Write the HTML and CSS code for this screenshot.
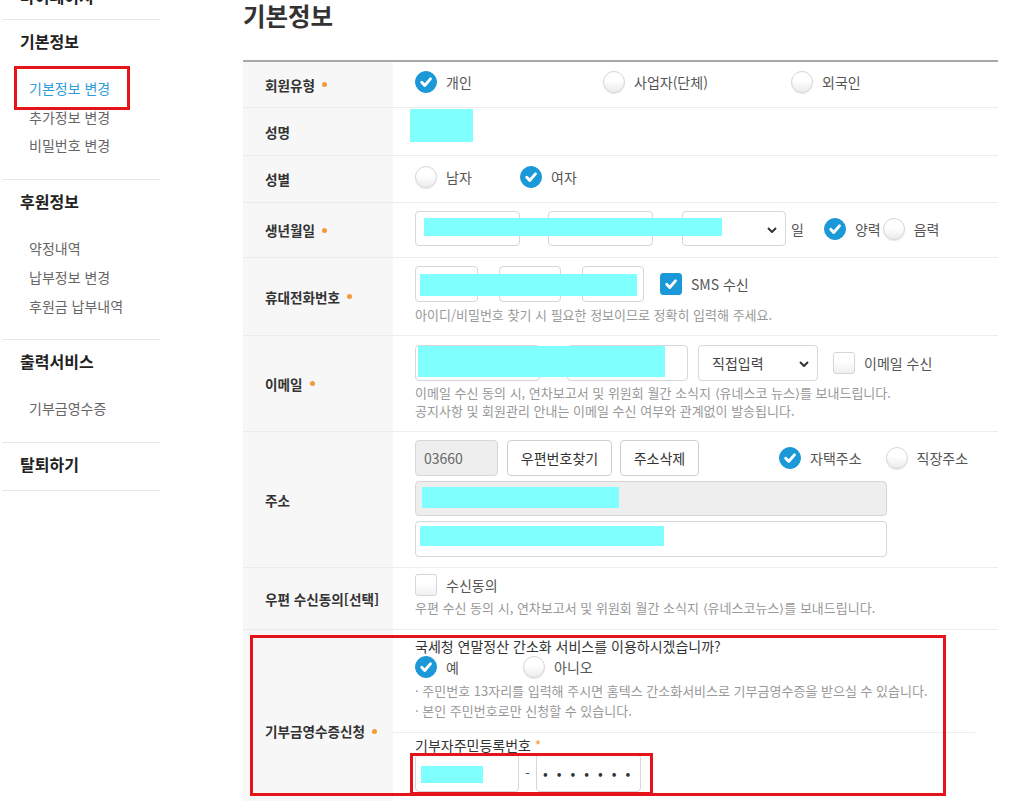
FILE: index.html
```html
<!DOCTYPE html>
<html lang="ko">
<head>
<meta charset="utf-8">
<title>기본정보</title>
<link rel="stylesheet" href="styles.css">
</head>
<body>
<div class="page">
  <aside class="side">
    <div class="side-top"><span class="side-top-txt">마이페이지</span></div>
    <section class="side-sec">
      <h2 class="side-h">기본정보</h2>
      <ul class="side-list">
        <li class="side-item active">기본정보 변경</li>
        <li class="side-item">추가정보 변경</li>
        <li class="side-item">비밀번호 변경</li>
      </ul>
    </section>
    <section class="side-sec">
      <h2 class="side-h">후원정보</h2>
      <ul class="side-list">
        <li class="side-item">약정내역</li>
        <li class="side-item">납부정보 변경</li>
        <li class="side-item">후원금 납부내역</li>
      </ul>
    </section>
    <section class="side-sec">
      <h2 class="side-h">출력서비스</h2>
      <ul class="side-list">
        <li class="side-item">기부금영수증</li>
      </ul>
    </section>
    <section class="side-sec last">
      <h2 class="side-h">탈퇴하기</h2>
    </section>
  </aside>

  <main class="main">
    <h1 class="title">기본정보</h1>
    <div class="form">

      <div class="row">
        <div class="lbl">회원유형<span class="req"></span></div>
        <div class="cell r1">
          <div class="opts wide">
            <span class="opt"><span class="rb on"><svg viewBox="0 0 22 22"><path d="M6.3 11.3l3.3 3.5L15.9 7.6"/></svg></span>개인</span>
            <span class="opt"><span class="rb"></span>사업자(단체)</span>
            <span class="opt"><span class="rb"></span>외국인</span>
          </div>
        </div>
      </div>

      <div class="row">
        <div class="lbl">성명</div>
        <div class="cell r2"><div class="name-mask"></div></div>
      </div>

      <div class="row">
        <div class="lbl">성별</div>
        <div class="cell r3">
          <div class="opts">
            <span class="opt w105"><span class="rb"></span>남자</span>
            <span class="opt"><span class="rb on"><svg viewBox="0 0 22 22"><path d="M6.3 11.3l3.3 3.5L15.9 7.6"/></svg></span>여자</span>
          </div>
        </div>
      </div>

      <div class="row">
        <div class="lbl">생년월일<span class="req"></span></div>
        <div class="cell r4">
          <div class="line">
            <span class="inp w105"></span>
            <span class="inp w105 ml28"></span>
            <span class="inp sel w104 ml29"><svg class="chev" viewBox="0 0 10 6"><path d="M1 1l4 4 4-4"/></svg></span>
            <span class="txt ml5">일</span>
            <span class="opt ml20"><span class="rb on"><svg viewBox="0 0 22 22"><path d="M6.3 11.3l3.3 3.5L15.9 7.6"/></svg></span>양력</span>
            <span class="opt tight"><span class="rb"></span>음력</span>
          </div>
          <span class="mask m-birth"></span>
        </div>
      </div>

      <div class="row">
        <div class="lbl">휴대전화번호<span class="req"></span></div>
        <div class="cell r5">
          <div class="line">
            <span class="inp h36 w63"></span>
            <span class="inp h36 w62 ml21"></span>
            <span class="inp h36 w62 ml21"></span>
            <span class="opt ml16"><span class="cb on"><svg viewBox="0 0 22 22"><path d="M6.3 11.3l3.3 3.5L15.9 7.6"/></svg></span>SMS 수신</span>
          </div>
          <p class="hint mt3">아이디/비밀번호 찾기 시 필요한 정보이므로 정확히 입력해 주세요.</p>
          <span class="mask m-phone"></span>
        </div>
      </div>

      <div class="row">
        <div class="lbl">이메일<span class="req"></span></div>
        <div class="cell r6">
          <div class="line">
            <span class="inp h36 w125"></span>
            <span class="inp h36 w121 ml27"></span>
            <span class="inp h36 sel w120 ml10"><span class="seltxt">직접입력</span><svg class="chev" viewBox="0 0 10 6"><path d="M1 1l4 4 4-4"/></svg></span>
            <span class="opt ml15"><span class="cb"></span>이메일 수신</span>
          </div>
          <p class="hint mt3 lh18">이메일 수신 동의 시, 연차보고서 및 위원회 월간 소식지 ⟨유네스코 뉴스⟩를 보내드립니다.<br>공지사항 및 회원관리 안내는 이메일 수신 여부와 관계없이 발송됩니다.</p>
          <span class="mask m-email"></span>
        </div>
      </div>

      <div class="row">
        <div class="lbl">주소</div>
        <div class="cell r7">
          <div class="line">
            <span class="inp h36 w83 gray zip">03660</span>
            <span class="btn w105 ml9">우편번호찾기</span>
            <span class="btn w79 ml8">주소삭제</span>
            <span class="opt ml80"><span class="rb on"><svg viewBox="0 0 22 22"><path d="M6.3 11.3l3.3 3.5L15.9 7.6"/></svg></span>자택주소</span>
            <span class="opt ml24"><span class="rb"></span>직장주소</span>
          </div>
          <span class="inp block gray mt5"></span>
          <span class="inp block h36 mt5"></span>
          <span class="mask m-addr1"></span>
          <span class="mask m-addr2"></span>
        </div>
      </div>

      <div class="row">
        <div class="lbl">우편 수신동의[선택]</div>
        <div class="cell r8">
          <div class="line">
            <span class="opt"><span class="cb"></span>수신동의</span>
          </div>
          <p class="hint mt2">우편 수신 동의 시, 연차보고서 및 위원회 월간 소식지 ⟨유네스코뉴스⟩를 보내드립니다.</p>
        </div>
      </div>

      <div class="row last-row">
        <div class="lbl">기부금영수증신청<span class="req"></span></div>
        <div class="cell r9">
          <p class="question">국세청 연말정산 간소화 서비스를 이용하시겠습니까?</p>
          <div class="opts">
            <span class="opt w108"><span class="rb on"><svg viewBox="0 0 22 22"><path d="M6.3 11.3l3.3 3.5L15.9 7.6"/></svg></span>예</span>
            <span class="opt"><span class="rb"></span>아니오</span>
          </div>
          <p class="hint mt3">· 주민번호 13자리를 입력해 주시면 홈텍스 간소화서비스로 기부금영수증을 받으실 수 있습니다.<br>· 본인 주민번호로만 신청할 수 있습니다.</p>
          <div class="sub">
            <p class="sub-lbl">기부자주민등록번호 <span class="star">*</span></p>
            <div class="line">
              <span class="inp h38 w104"></span>
              <span class="dash">-</span>
              <span class="inp h38 w105 dots">•••••••</span>
            </div>
          </div>
          <span class="mask m-jumin"></span>
        </div>
        <span class="redbox big"></span>
        <span class="redbox small"></span>
      </div>

    </div>
  </main>
</div>
</body>
</html>
```

FILE: styles.css
```css
* { box-sizing: border-box; }

body {
  margin: 0;
  font-family: "Noto Sans CJK KR", "Noto Sans", sans-serif;
  font-size: 14px;
  color: #555;
  background: #fff;
  overflow: hidden;
}

p, h1, h2, ul { margin: 0; padding: 0; }
ul { list-style: none; }

.page {
  display: flex;
  align-items: flex-start;
}

/* ---------- sidebar ---------- */
.side {
  width: 158px;
  margin-left: 2px;
  flex: none;
}

.side-top {
  height: 19px;
  border-bottom: 1px solid #e6e6e6;
  box-sizing: content-box;
  position: relative;
  overflow: hidden;
}
.side-top-txt {
  display: block;
  margin-top: -14px;
  padding-left: 18px;
  line-height: 20px;
  font-size: 16px;
  font-weight: 700;
  color: #222;
}

.side-sec {
  padding: 11px 0 19px;
  border-bottom: 1px solid #e6e6e6;
}
.side-sec.last { padding-bottom: 16px; }

.side-h {
  padding-left: 18px;
  font-size: 16px;
  line-height: 20px;
  font-weight: 700;
  color: #222;
}

.side-list { margin-top: 23px; }

.side-item {
  position: relative;
  padding-left: 27px;
  line-height: 28.7px;
  font-size: 14px;
  color: #666;
}
.side-item.active { color: #2e9ddb; }
.side-item.active::after {
  content: "";
  position: absolute;
  left: 12px;
  top: -8px;
  width: 110px;
  height: 38px;
  border: 3px solid #e5141b;
}

/* ---------- main ---------- */
.main {
  margin-left: 83px;
  width: 755px;
  flex: none;
}

.title {
  font-size: 24.5px;
  line-height: 32px;
  font-weight: 700;
  color: #333;
}

.form {
  margin-top: 28px;
  border-top: 2px solid #a8a8a8;
}

.row {
  position: relative;
  display: grid;
  grid-template-columns: 150px 1fr;
  border-bottom: 1px solid #ececec;
}

.lbl {
  display: flex;
  align-items: center;
  padding-left: 22px;
  background: #f7f7f7;
  font-size: 13.6px;
  font-weight: 700;
  color: #333;
  white-space: nowrap;
}

.req {
  display: inline-block;
  width: 5px;
  height: 5px;
  margin-left: 7px;
  border-radius: 50%;
  background: #f39a3b;
}

.cell {
  position: relative;
  padding-left: 22px;
}

.r1 { padding-top: 9px; padding-bottom: 14px; }
.r2 { padding-top: 1px; padding-bottom: 13px; }
.r3 { padding-top: 10px; padding-bottom: 14px; }
.r4 { padding-top: 8px; padding-bottom: 11px; }
.r5 { padding-top: 8px; padding-bottom: 10px; }
.r6 { padding-top: 9px; padding-bottom: 11px; }
.r7 { padding-top: 8px; padding-bottom: 10px; }
.r8 { padding-top: 6px; padding-bottom: 11px; }
.r9 { padding-top: 6px; padding-bottom: 40px; }

.opts, .line {
  display: flex;
  align-items: center;
}
.opts.wide .opt { width: 188px; flex: none; }

.opt {
  display: inline-flex;
  align-items: center;
  line-height: 22px;
  color: #555;
  flex: none;
}
.opt .rb, .opt .cb { margin-right: 9px; }
.opt.tight .rb { margin-left: 2px; }

.rb {
  display: inline-flex;
  align-items: center;
  justify-content: center;
  width: 22px;
  height: 22px;
  border-radius: 50%;
  background: linear-gradient(#fff 40%, #ececec);
  border: 1px solid #d6d6d6;
  box-shadow: 0 1px 1px rgba(0,0,0,0.1);
  flex: none;
}
.cb {
  display: inline-flex;
  align-items: center;
  justify-content: center;
  width: 22px;
  height: 22px;
  border-radius: 3px;
  background: linear-gradient(#fff 40%, #f0f0f0);
  border: 1px solid #d6d6d6;
  flex: none;
}
.rb.on, .cb.on {
  background: #1b98d8;
  border-color: #1b98d8;
  box-shadow: none;
}
.rb svg, .cb svg { width: 22px; height: 22px; }
.rb path, .cb path {
  fill: none;
  stroke: #fff;
  stroke-width: 3.2;
  stroke-linecap: round;
  stroke-linejoin: round;
}

.name-mask {
  width: 63px;
  height: 33px;
  margin-left: -5px;
  background: #80ffff;
}

.inp {
  display: inline-flex;
  align-items: center;
  height: 35px;
  border: 1px solid #d6d6d6;
  border-radius: 4px;
  background: #fff;
  flex: none;
  position: relative;
  color: #555;
}
.inp.h36 { height: 36px; }
.inp.h38 { height: 38px; }
.inp.gray { background: #eee; }
.inp.block { display: block; width: 472px; }
.inp.zip { padding-left: 8px; color: #666; }

.sel .chev {
  position: absolute;
  right: 8px;
  top: 50%;
  width: 10px;
  height: 6px;
  margin-top: -2px;
}
.chev path { fill: none; stroke: #333; stroke-width: 2; }
.seltxt { padding-left: 13px; color: #444; }

.btn {
  display: inline-flex;
  align-items: center;
  justify-content: center;
  height: 36px;
  border: 1px solid #cfcfcf;
  border-radius: 4px;
  background: #fff;
  color: #333;
  flex: none;
}

.txt { color: #555; }

.w62 { width: 62px; } .w63 { width: 63px; } .w79 { width: 79px; }
.w83 { width: 83px; } .w104 { width: 104px; } .w105 { width: 105px; }
.w108 { width: 108px; } .w120 { width: 120px; } .w121 { width: 121px; }
.w125 { width: 125px; }

.ml5 { margin-left: 5px; } .ml8 { margin-left: 8px; } .ml9 { margin-left: 9px; }
.ml10 { margin-left: 10px; } .ml15 { margin-left: 15px; } .ml16 { margin-left: 16px; }
.ml20 { margin-left: 20px; } .ml21 { margin-left: 21px; } .ml24 { margin-left: 24px; }
.ml27 { margin-left: 27px; } .ml28 { margin-left: 28px; } .ml29 { margin-left: 29px; }
.ml80 { margin-left: 80px; }
.mt2 { margin-top: 2px; } .mt3 { margin-top: 3px; } .mt5 { margin-top: 5px; }

.hint {
  font-size: 13px;
  line-height: 20px;
  color: #999;
  white-space: nowrap;
}
.hint.lh18 { line-height: 18px; }

.question {
  line-height: 20px;
  color: #333;
}

.sub {
  margin-top: 11px;
  margin-left: -22px;
  margin-right: 23px;
  padding-left: 22px;
  padding-top: 3px;
  border-top: 1px solid #ececec;
}
.sub-lbl { line-height: 18px; color: #333; }
.star { color: #f39a3b; }
.dash { width: 17px; text-align: center; color: #555; }
.dots {
  justify-content: flex-start;
  font-size: 14px;
  letter-spacing: 9px;
  padding-left: 6px;
  color: #333;
  overflow: hidden;
}

/* redaction overlays */
.mask {
  position: absolute;
  background: #80ffff;
}
.m-birth { left: 31px; top: 15px; width: 298px; height: 18px; }
.m-phone { left: 27px; top: 16px; width: 217px; height: 22px; }
.m-email { left: 25px; top: 10px; width: 247px; height: 31px; }
.m-addr1 { left: 29px; top: 55px; width: 197px; height: 21px; }
.m-addr2 { left: 27px; top: 94px; width: 244px; height: 20px; }
.m-jumin { left: 28px; top: 136px; width: 62px; height: 17px; }

/* annotation boxes */
.redbox {
  position: absolute;
  border: 3px solid #e5141b;
  pointer-events: none;
}
.redbox.big { left: 7px; top: 5px; width: 696px; height: 161px; }
.redbox.small { left: 167px; top: 123px; width: 243px; height: 42px; }
```
